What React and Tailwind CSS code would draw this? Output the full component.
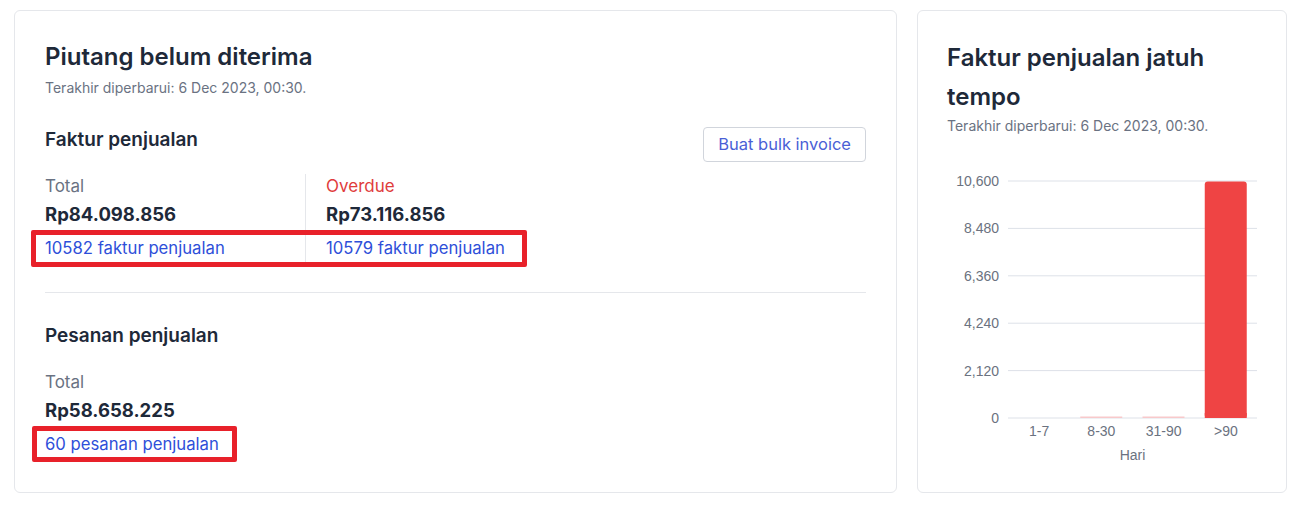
import React from 'react';

const TICKS = [10600, 8480, 6360, 4240, 2120, 0];
const BARS = [
  { label: '1-7', value: 0 },
  { label: '8-30', value: 12 },
  { label: '31-90', value: 12 },
  { label: '>90', value: 10579 },
];

function Stat({ label, value, link, red, className = '' }) {
  return (
    <div className={className}>
      <p className={`text-[17px] leading-6 ${red ? 'text-[#e03c3c]' : 'text-gray-500'}`}>{label}</p>
      <p className="mt-[3px] text-[18.5px] leading-[26px] font-bold text-gray-800">{value}</p>
      <a className="mt-[9px] block text-[16.7px] leading-6 text-[#2e4fd9]">{link}</a>
    </div>
  );
}

function OverdueChart() {
  const left = 90, right = 339, top = 17, bottom = 254;
  const step = (bottom - top) / 5;
  const col = (right - left) / 4;
  return (
    <svg width="368" height="310" className="block" style={{ fontFamily: '"Liberation Sans", Arial, sans-serif' }}>
      {TICKS.map((t, i) => (
        <g key={t}>
          <line x1={left} x2={right} y1={top + i * step} y2={top + i * step} stroke="#dde1e8" strokeWidth="1" />
          <text x={left - 9} y={top + i * step + 5} textAnchor="end" fontSize="14" fill="#6b7280">
            {t.toLocaleString('en-US')}
          </text>
        </g>
      ))}
      {BARS.map((b, i) => {
        const h = Math.max((b.value / 10600) * (bottom - top), b.value ? 1.5 : 0);
        const x = left + i * col + 10;
        return (
          <g key={b.label}>
            {h > 0 && (
              <rect
                x={x}
                y={bottom - h}
                width={42}
                height={h}
                rx={h > 10 ? 3 : 0}
                fill={h > 10 ? '#ef4444' : '#f8c9cb'}
              />
            )}
            {h > 10 && <rect x={x} y={bottom - 5} width={42} height={5} fill="#ef4444" />}
            <text x={left + i * col + col / 2} y={bottom + 18} textAnchor="middle" fontSize="14" fill="#6b7280">
              {b.label}
            </text>
          </g>
        );
      })}
      <text x={(left + right) / 2} y={bottom + 42} textAnchor="middle" fontSize="14" fill="#6b7280">
        Hari
      </text>
    </svg>
  );
}

export default function App() {
  return (
    <div
      className="w-[1307px] h-[512px] bg-white flex gap-[20px] pl-[14px] pr-[20px] pt-[10px] pb-[19px] text-gray-800"
      style={{ fontFamily: 'Inter, "Noto Sans", sans-serif' }}
    >
      {/* Piutang card */}
      <div className="relative w-[883px] shrink-0 rounded-[6px] border border-gray-200 px-[30px] pt-[30px]">
        <h2 className="text-[24px] leading-8 font-semibold text-gray-800">Piutang belum diterima</h2>
        <p className="mt-[5px] text-[14px] leading-5 text-gray-500">Terakhir diperbarui: 6 Dec 2023, 00:30.</p>

        <div className="mt-[28px] flex items-start justify-between">
          <h3 className="text-[19px] leading-7 font-semibold text-gray-800">Faktur penjualan</h3>
          <button className="mt-[1px] h-[35px] px-[14px] rounded-[4px] border border-gray-300 text-[16.5px] text-[#4a5fd6]">
            Buat bulk invoice
          </button>
        </div>

        <div className="mt-[12px] flex pb-[29px] border-b border-gray-200">
          <Stat className="w-[261px] border-r border-gray-200 pb-[3px]" label="Total" value="Rp84.098.856" link="10582 faktur penjualan" />
          <Stat className="pl-[20px]" red label="Overdue" value="Rp73.116.856" link="10579 faktur penjualan" />
        </div>

        <h3 className="mt-[29px] text-[19px] leading-7 font-semibold text-gray-800">Pesanan penjualan</h3>
        <Stat className="mt-[20px]" label="Total" value="Rp58.658.225" link="60 pesanan penjualan" />

        {/* annotation highlights */}
        <div className="absolute left-[16px] top-[219px] w-[496px] h-[37px] border-[5px] border-[#e8212a] rounded-[2px]" />
        <div className="absolute left-[17px] top-[415px] w-[205px] h-[36px] border-[5px] border-[#e8212a] rounded-[2px]" />
      </div>

      {/* Jatuh tempo card */}
      <div className="w-[370px] min-w-0 shrink-0 rounded-[6px] border border-gray-200 pl-[29px] pr-[29px] pt-[27px]">
        <h2 className="text-[24px] leading-[39px] font-semibold text-gray-800">Faktur penjualan jatuh tempo</h2>
        <p className="text-[14px] leading-5 text-gray-500">Terakhir diperbarui: 6 Dec 2023, 00:30.</p>
        <div className="-ml-[29px] mt-[28px]">
          <OverdueChart />
        </div>
      </div>
    </div>
  );
}
